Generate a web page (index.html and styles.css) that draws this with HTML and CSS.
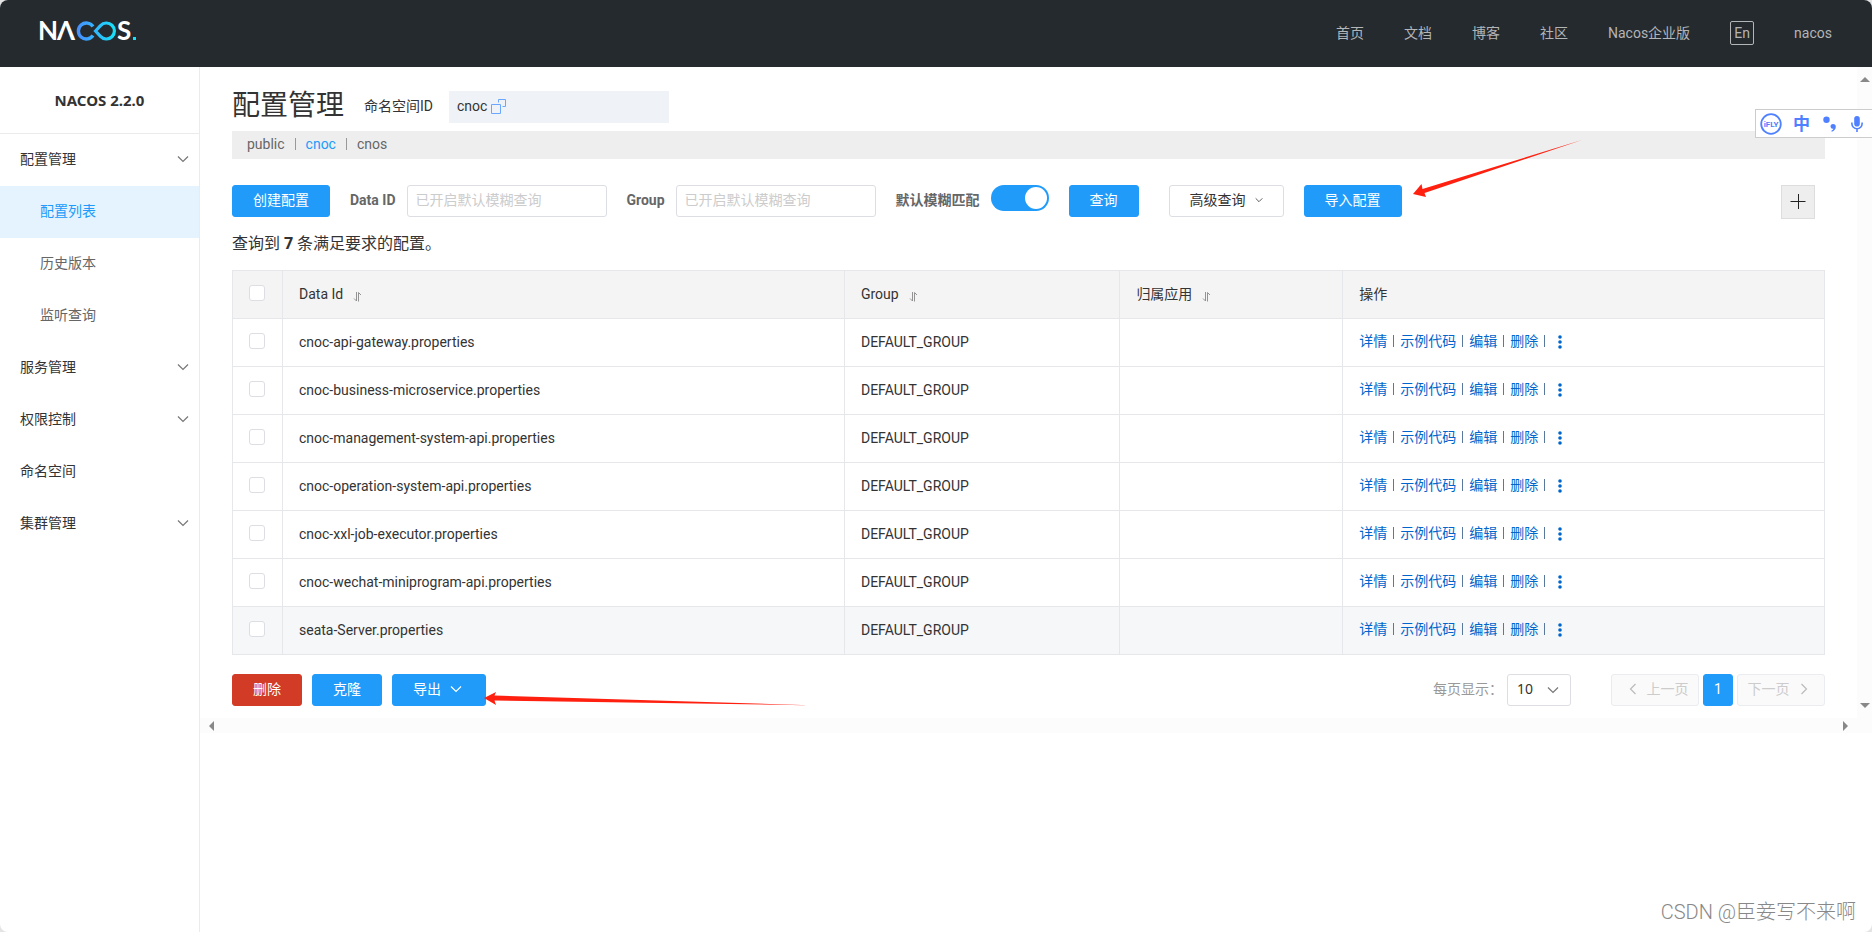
FILE: index.html
```html
<!DOCTYPE html>
<html lang="zh-CN">
<head>
<meta charset="utf-8">
<title>Nacos</title>
<link rel="stylesheet" href="styles.css">
</head>
<body>
<svg class="defs" width="0" height="0" aria-hidden="true">
  <symbol id="chevron" viewBox="0 0 12 12"><path d="M1 3.5 6 8.500 11 3.500" fill="none" stroke="currentColor" stroke-width="1.2"/></symbol>
  <symbol id="sort" viewBox="0 0 8 11"><path d="M3.500 1v9L1 7.500M5.500 10.500V1.500L8 4" fill="none" stroke="currentColor" stroke-width=".9"/></symbol>
  <symbol id="more" viewBox="0 0 4 14"><circle cx="2" cy="2" r="1.800"/><circle cx="2" cy="7" r="1.800"/><circle cx="2" cy="12" r="1.800"/></symbol>
</svg>
<div class="app">
  <header class="header">
    <a href="#" class="logo" aria-label="Nacos">
      <svg width="100" height="44" viewBox="-4 -10 100 44">
        <defs><linearGradient id="loop" gradientUnits="userSpaceOnUse" x1="36" y1="0" x2="76" y2="0"><stop offset="0" stop-color="#4a8cff"/><stop offset="1" stop-color="#16e3f8"/></linearGradient></defs>
        <text class="logo-text" x="-2" y="20">N</text>
        <text class="logo-text" x="17" y="20">Λ</text>
        <path d="M53 15.500A8 8 0 1 1 53 6.500" fill="none" stroke="url(#loop)" stroke-width="3.400"/>
        <path d="M55.500 11 60.500 5.600A8 8 0 1 1 60.500 16.400Z" fill="none" stroke="url(#loop)" stroke-width="3.200"/>
        <text class="logo-text" x="77" y="20">S</text>
        <rect x="93" y="17" width="3" height="3" fill="#16e3f8"/>
      </svg>
    </a>
    <nav class="nav">
      <a href="#">首页</a>
      <a href="#">文档</a>
      <a href="#">博客</a>
      <a href="#">社区</a>
      <a href="#">Nacos企业版</a>
      <button type="button" class="lang">En</button>
      <a href="#">nacos</a>
    </nav>
  </header>
  <div class="body">
    <aside class="sidebar">
      <h1 class="version">NACOS 2.2.0</h1>
      <nav class="menu">
        <a href="#">配置管理<svg class="arrow"><use href="#chevron"/></svg></a>
        <a href="#" class="sub active">配置列表</a>
        <a href="#" class="sub">历史版本</a>
        <a href="#" class="sub">监听查询</a>
        <a href="#">服务管理<svg class="arrow"><use href="#chevron"/></svg></a>
        <a href="#">权限控制<svg class="arrow"><use href="#chevron"/></svg></a>
        <a href="#">命名空间</a>
        <a href="#">集群管理<svg class="arrow"><use href="#chevron"/></svg></a>
      </nav>
    </aside>
    <div class="viewport">
      <main class="content">
        <div class="heading">
          <h2>配置管理</h2>
          <span class="ns-label">命名空间ID</span>
          <span class="ns-value">cnoc
            <svg width="16" height="15" viewBox="0 0 16 15" fill="none" stroke="#6ba6ff"><path d="M.5 5.500h9v9h-9zM7.500 3.500v-3h7v7h-3"/></svg>
          </span>
        </div>
        <div class="namespaces">
          <a href="#">public</a><i></i><a href="#" class="current">cnoc</a><i></i><a href="#">cnos</a>
        </div>
        <form class="toolbar">
          <button type="button" class="btn primary">创建配置</button>
          <div class="field"><label for="data-id">Data ID</label><input id="data-id" type="text" placeholder="已开启默认模糊查询"></div>
          <div class="field"><label for="group">Group</label><input id="group" type="text" placeholder="已开启默认模糊查询"></div>
          <div class="field"><label for="fuzzy">默认模糊匹配</label><input id="fuzzy" class="switch" type="checkbox" role="switch" checked></div>
          <button type="button" class="btn primary">查询</button>
          <button type="button" class="btn advanced">高级查询<svg class="tiny"><use href="#chevron"/></svg></button>
          <div class="import">
            <button type="button" class="btn primary">导入配置</button>
            <svg class="pointer-import" width="172" height="60" viewBox="0 0 172 60"><path d="M1 55 9.500 45 10.500 50 170 1 12.500 54 14 58Z" fill="#ff2010"/></svg>
          </div>
          <button type="button" class="add" aria-label="新建">
            <svg width="16" height="16" viewBox="0 0 16 16" stroke="#222" stroke-width="1"><path d="M.5 7.500h15M8.500 0v15"/></svg>
          </button>
        </form>
        <p class="count">查询到 <b>7</b> 条满足要求的配置。</p>
        <table class="grid">
          <colgroup><col class="c-check"><col class="c-id"><col class="c-group"><col class="c-app"><col></colgroup>
          <thead>
            <tr>
              <th><input type="checkbox" aria-label="全选"></th>
              <th>Data Id<svg class="sort"><use href="#sort"/></svg></th>
              <th>Group<svg class="sort"><use href="#sort"/></svg></th>
              <th>归属应用<svg class="sort"><use href="#sort"/></svg></th>
              <th>操作</th>
            </tr>
          </thead>
          <tbody>
            <tr><td><input type="checkbox" aria-label="cnoc-api-gateway"></td><td>cnoc-api-gateway.properties</td><td>DEFAULT_GROUP</td><td></td><td><div class="ops"><a href="#">详情</a><i></i><a href="#">示例代码</a><i></i><a href="#">编辑</a><i></i><a href="#">删除</a><i></i><button type="button" aria-label="更多"><svg><use href="#more"/></svg></button></div></td></tr>
            <tr><td><input type="checkbox" aria-label="cnoc-business-microservice"></td><td>cnoc-business-microservice.properties</td><td>DEFAULT_GROUP</td><td></td><td><div class="ops"><a href="#">详情</a><i></i><a href="#">示例代码</a><i></i><a href="#">编辑</a><i></i><a href="#">删除</a><i></i><button type="button" aria-label="更多"><svg><use href="#more"/></svg></button></div></td></tr>
            <tr><td><input type="checkbox" aria-label="cnoc-management-system-api"></td><td>cnoc-management-system-api.properties</td><td>DEFAULT_GROUP</td><td></td><td><div class="ops"><a href="#">详情</a><i></i><a href="#">示例代码</a><i></i><a href="#">编辑</a><i></i><a href="#">删除</a><i></i><button type="button" aria-label="更多"><svg><use href="#more"/></svg></button></div></td></tr>
            <tr><td><input type="checkbox" aria-label="cnoc-operation-system-api"></td><td>cnoc-operation-system-api.properties</td><td>DEFAULT_GROUP</td><td></td><td><div class="ops"><a href="#">详情</a><i></i><a href="#">示例代码</a><i></i><a href="#">编辑</a><i></i><a href="#">删除</a><i></i><button type="button" aria-label="更多"><svg><use href="#more"/></svg></button></div></td></tr>
            <tr><td><input type="checkbox" aria-label="cnoc-xxl-job-executor"></td><td>cnoc-xxl-job-executor.properties</td><td>DEFAULT_GROUP</td><td></td><td><div class="ops"><a href="#">详情</a><i></i><a href="#">示例代码</a><i></i><a href="#">编辑</a><i></i><a href="#">删除</a><i></i><button type="button" aria-label="更多"><svg><use href="#more"/></svg></button></div></td></tr>
            <tr><td><input type="checkbox" aria-label="cnoc-wechat-miniprogram-api"></td><td>cnoc-wechat-miniprogram-api.properties</td><td>DEFAULT_GROUP</td><td></td><td><div class="ops"><a href="#">详情</a><i></i><a href="#">示例代码</a><i></i><a href="#">编辑</a><i></i><a href="#">删除</a><i></i><button type="button" aria-label="更多"><svg><use href="#more"/></svg></button></div></td></tr>
            <tr class="hover"><td><input type="checkbox" aria-label="seata-Server"></td><td>seata-Server.properties</td><td>DEFAULT_GROUP</td><td></td><td><div class="ops"><a href="#">详情</a><i></i><a href="#">示例代码</a><i></i><a href="#">编辑</a><i></i><a href="#">删除</a><i></i><button type="button" aria-label="更多"><svg><use href="#more"/></svg></button></div></td></tr>
          </tbody>
        </table>
        <div class="footer">
          <button type="button" class="btn danger">删除</button>
          <button type="button" class="btn primary">克隆</button>
          <div class="export">
            <button type="button" class="btn primary">导出<svg class="arrow"><use href="#chevron"/></svg></button>
            <svg class="pointer-export" width="326" height="16" viewBox="0 0 326 16"><path d="M0 7 12 1 10.500 4.600 325 14.200 10.500 9.500 12 14Z" fill="#ff2010"/></svg>
          </div>
          <div class="size">
            <label for="page-size">每页显示：</label>
            <select id="page-size"><option>10</option><option>20</option></select>
            <svg class="arrow"><use href="#chevron"/></svg>
          </div>
          <div class="pager">
            <button type="button" class="btn back" disabled><svg class="arrow"><use href="#chevron"/></svg>上一页</button>
            <button type="button" class="btn page">1</button>
            <button type="button" class="btn forward" disabled>下一页<svg class="arrow"><use href="#chevron"/></svg></button>
          </div>
        </div>
      </main>
      <div class="track vertical"><svg width="10" height="5" viewBox="0 0 10 5"><path d="M0 5 5 0l5 5z"/></svg><svg width="10" height="5" viewBox="0 0 10 5"><path d="M0 0h10L5 5z"/></svg></div>
      <div class="track horizontal"><svg width="5" height="10" viewBox="0 0 5 10"><path d="M5 0v10L0 5z"/></svg><svg width="5" height="10" viewBox="0 0 5 10"><path d="M0 0l5 5-5 5z"/></svg></div>
    </div>
  </div>
  <div class="ime">
    <svg width="22" height="22" viewBox="0 0 22 22"><circle cx="11" cy="11" r="9.800" fill="none" stroke="#4f80ff" stroke-width="1.800"/><text class="ime-name" x="11" y="14" text-anchor="middle">iFLY</text></svg>
    <span class="ime-lang">中</span>
    <svg width="14" height="16" viewBox="0 0 14 16" fill="#4f80ff"><circle cx="3.500" cy="3.800" r="3.200"/><path d="M10 8a2.800 2.800 0 0 1 2.800 2.800c0 2.400-1.600 4.200-4 4.900l-.5-1c1.300-.5 2-1.200 2.100-2A2.500 2.500 0 0 1 7.500 10.500 2.500 2.500 0 0 1 10 8z"/></svg>
    <svg width="12" height="16" viewBox="0 0 12 16"><rect x="3.200" y="0" width="5.600" height="10.500" rx="2.800" fill="#4f80ff"/><path d="M.9 6.500v1.200a5.100 5.100 0 0 0 10.200 0V6.500M6 12.500V16" fill="none" stroke="#4f80ff" stroke-width="1.600"/></svg>
  </div>
  <div class="watermark">CSDN @臣妾写不来啊</div>
</div>
</body>
</html>
```
FILE: styles.css
```css
* { box-sizing: border-box; }
html { background: #e4e4e4; }
body {
  margin: 0;
  font-family: Roboto, "Noto Sans CJK SC", sans-serif;
  font-size: 14px;
  line-height: 20px;
  color: #333;
}
a { color: inherit; text-decoration: none; }
button, input, select { font: inherit; color: inherit; }
.defs { position: absolute; }

.app {
  position: relative;
  display: flex;
  flex-direction: column;
  min-height: 100vh;
  background: #fff;
  border-radius: 8px;
  overflow: hidden;
}

.header {
  display: flex;
  justify-content: space-between;
  align-items: center;
  height: 67px;
  padding: 0 40px 2px 36px;
  background: #252a2f;
}
.logo { display: flex; padding-bottom: 2px; }
.logo-text { font: 700 26px Lato, sans-serif; fill: #fff; }
.nav { display: flex; align-items: center; gap: 40px; color: #b3b5b7; }
.lang {
  width: 24px;
  height: 24px;
  padding: 0;
  border: 1px solid #b3b5b7;
  border-radius: 2px;
  background: none;
  line-height: 20px;
}

.body { flex: 1; display: flex; }

.sidebar { flex: none; width: 200px; border-right: 1px solid #ebebeb; }
.version {
  margin: 0;
  height: 67px;
  border-bottom: 1px solid #ebebeb;
  font: 700 15px/66px "Noto Sans", sans-serif;
  text-align: center;
}
.menu { display: flex; flex-direction: column; }
.menu a {
  display: flex;
  justify-content: space-between;
  align-items: center;
  height: 52px;
  padding: 0 10px 2px 20px;
}
.menu .sub { padding-left: 40px; color: #666; }
.menu .active { background: #e4f3fe; color: #209bfa; }
.arrow { width: 12px; height: 12px; color: #777; }

.viewport {
  flex: 1;
  min-width: 0;
  display: grid;
  grid-template-columns: minmax(0, 1fr) 15px;
  grid-template-rows: auto 15px;
  align-content: start;
}
.content { padding: 24px 32px 12px; }
.track { display: flex; justify-content: space-between; align-items: center; background: #fcfcfc; fill: #888; }
.vertical { flex-direction: column; padding: 10px 0; }
.horizontal { grid-column: 1 / 3; padding: 0 24px 0 9px; }

.heading { display: flex; align-items: center; height: 32px; }
.heading h2 { margin: 0 20px 0 0; font-size: 28px; font-weight: 400; line-height: 32px; padding-bottom: 2px; }
.ns-label { margin-right: 16px; padding-bottom: 2px; }
.ns-value {
  display: flex;
  align-items: center;
  gap: 4px;
  width: 220px;
  height: 32px;
  padding: 0 8px 2px;
  background: #eff3f8;
}

.namespaces {
  display: flex;
  align-items: center;
  height: 28px;
  margin-top: 8px;
  padding: 0 15px 2px;
  background: #eee;
  color: #666;
}
.namespaces i { width: 1px; height: 12px; margin: 0 10px; background: #999; }
.namespaces .current { color: #209bfa; }

.toolbar { display: flex; align-items: flex-start; margin-top: 26px; }
.btn {
  display: flex;
  align-items: center;
  justify-content: center;
  height: 32px;
  padding: 0 20px 2px;
  border: 1px solid #dcdee3;
  border-radius: 3px;
  background: #fff;
  white-space: nowrap;
}
.primary { background: #209bfa; border-color: #209bfa; color: #fff; }
.danger { background: #d23c26; border-color: #d23c26; color: #fff; }
.field { display: flex; align-items: flex-start; margin-left: 20px; }
.field label { margin-right: 11px; line-height: 30px; font-weight: 700; color: #666; }
.field input[type="text"] {
  width: 200px;
  height: 32px;
  padding: 0 8px 2px;
  border: 1px solid #dcdee3;
  border-radius: 3px;
}
.field ::placeholder { color: #ccc; opacity: 1; }
.switch {
  appearance: none;
  width: 58px;
  height: 26px;
  margin: 0 20px 0 0;
  padding: 2px;
  border-radius: 13px;
  background: #209bfa;
}
.switch::before {
  content: "";
  display: block;
  width: 22px;
  height: 22px;
  margin-left: auto;
  border-radius: 11px;
  background: #fff;
}
.advanced { gap: 9px; margin: 0 20px 0 30px; }
.tiny { width: 8px; height: 8px; }
.import, .export { position: relative; }
.pointer-import { position: absolute; left: 108px; top: -46px; }
.add {
  display: flex;
  align-items: center;
  justify-content: center;
  width: 34px;
  height: 34px;
  margin: 0 10px 0 auto;
  padding: 0;
  border: 1px solid #ddd;
  background: #eee;
}

.count { margin: 11px 0 13px; font-size: 16px; line-height: 26px; }
.count b { font-family: "Noto Sans", sans-serif; }

.grid { width: 100%; table-layout: fixed; border-collapse: collapse; }
.c-check { width: 50px; }
.c-id { width: 35.3%; }
.c-group { width: 17.3%; }
.c-app { width: 14%; }
.grid th, .grid td {
  height: 48px;
  padding: 0 16px 2px;
  border: 1px solid #e6e7eb;
  font-weight: 400;
  text-align: left;
}
.grid th { background: #f4f4f4; }
.hover { background: #f5f7f9; }
.grid input {
  appearance: none;
  display: block;
  width: 16px;
  height: 16px;
  margin: 0 0 2px;
  border: 1px solid #dcdee3;
  border-radius: 3px;
  background: #fff;
}
.sort { width: 8px; height: 11px; margin-left: 10px; vertical-align: -3px; color: #888; }
.ops { display: flex; align-items: center; padding-bottom: 2px; color: #06c; }
.ops i { width: 1px; height: 12px; margin: 0 6px; background: #58799b; }
.ops button { display: flex; margin-left: 7px; padding: 3px 0 0; border: 0; background: none; }
.ops svg { width: 4px; height: 14px; fill: #06c; }

.footer { display: flex; align-items: center; gap: 10px; margin-top: 19px; }
.export .btn { gap: 9px; padding-right: 23px; }
.export .arrow { color: #fff; }
.pointer-export { position: absolute; left: 92px; top: 17px; }
.size { position: relative; display: flex; align-items: center; gap: 4px; margin-left: auto; }
.size label { padding-bottom: 2px; color: #999; }
.size select {
  appearance: none;
  width: 64px;
  height: 32px;
  padding: 0 9px 2px;
  border: 1px solid #dcdee3;
  border-radius: 3px;
  background: #fff;
  font-family: "Noto Sans", sans-serif;
}
.size .arrow { position: absolute; right: 12px; top: 10px; pointer-events: none; }
.pager { display: flex; gap: 4px; margin-left: 30px; }
.pager .btn { width: 88px; gap: 8px; padding: 0 0 2px; }
.pager .btn:disabled { border-color: #ebecf0; background: #fafafa; color: #ccc; }
.pager .page { width: 30px; border-color: #209bfa; background: #209bfa; color: #fff; }
.pager .back { padding-left: 5px; }
.pager .forward { padding-right: 5px; }
.pager .arrow { color: #bbb; }
.back .arrow { transform: rotate(90deg); }
.forward .arrow { transform: rotate(-90deg); }

.ime {
  position: absolute;
  top: 109px;
  right: 0;
  display: flex;
  align-items: center;
  width: 117px;
  height: 29px;
  padding-left: 4px;
  border: 1px solid #ccc;
  border-right: 0;
  background: #fff;
}
.ime-name { font: 700 8px Roboto, sans-serif; fill: #4f80ff; }
.ime-lang { margin: 0 13px 0 11px; font-size: 17px; font-weight: 700; color: #4f80ff; }
.ime svg + svg { margin-left: 14px; }
.watermark {
  position: absolute;
  right: 16px;
  bottom: 8px;
  font-size: 20px;
  font-weight: 300;
  line-height: 24px;
  color: #888;
}
```
